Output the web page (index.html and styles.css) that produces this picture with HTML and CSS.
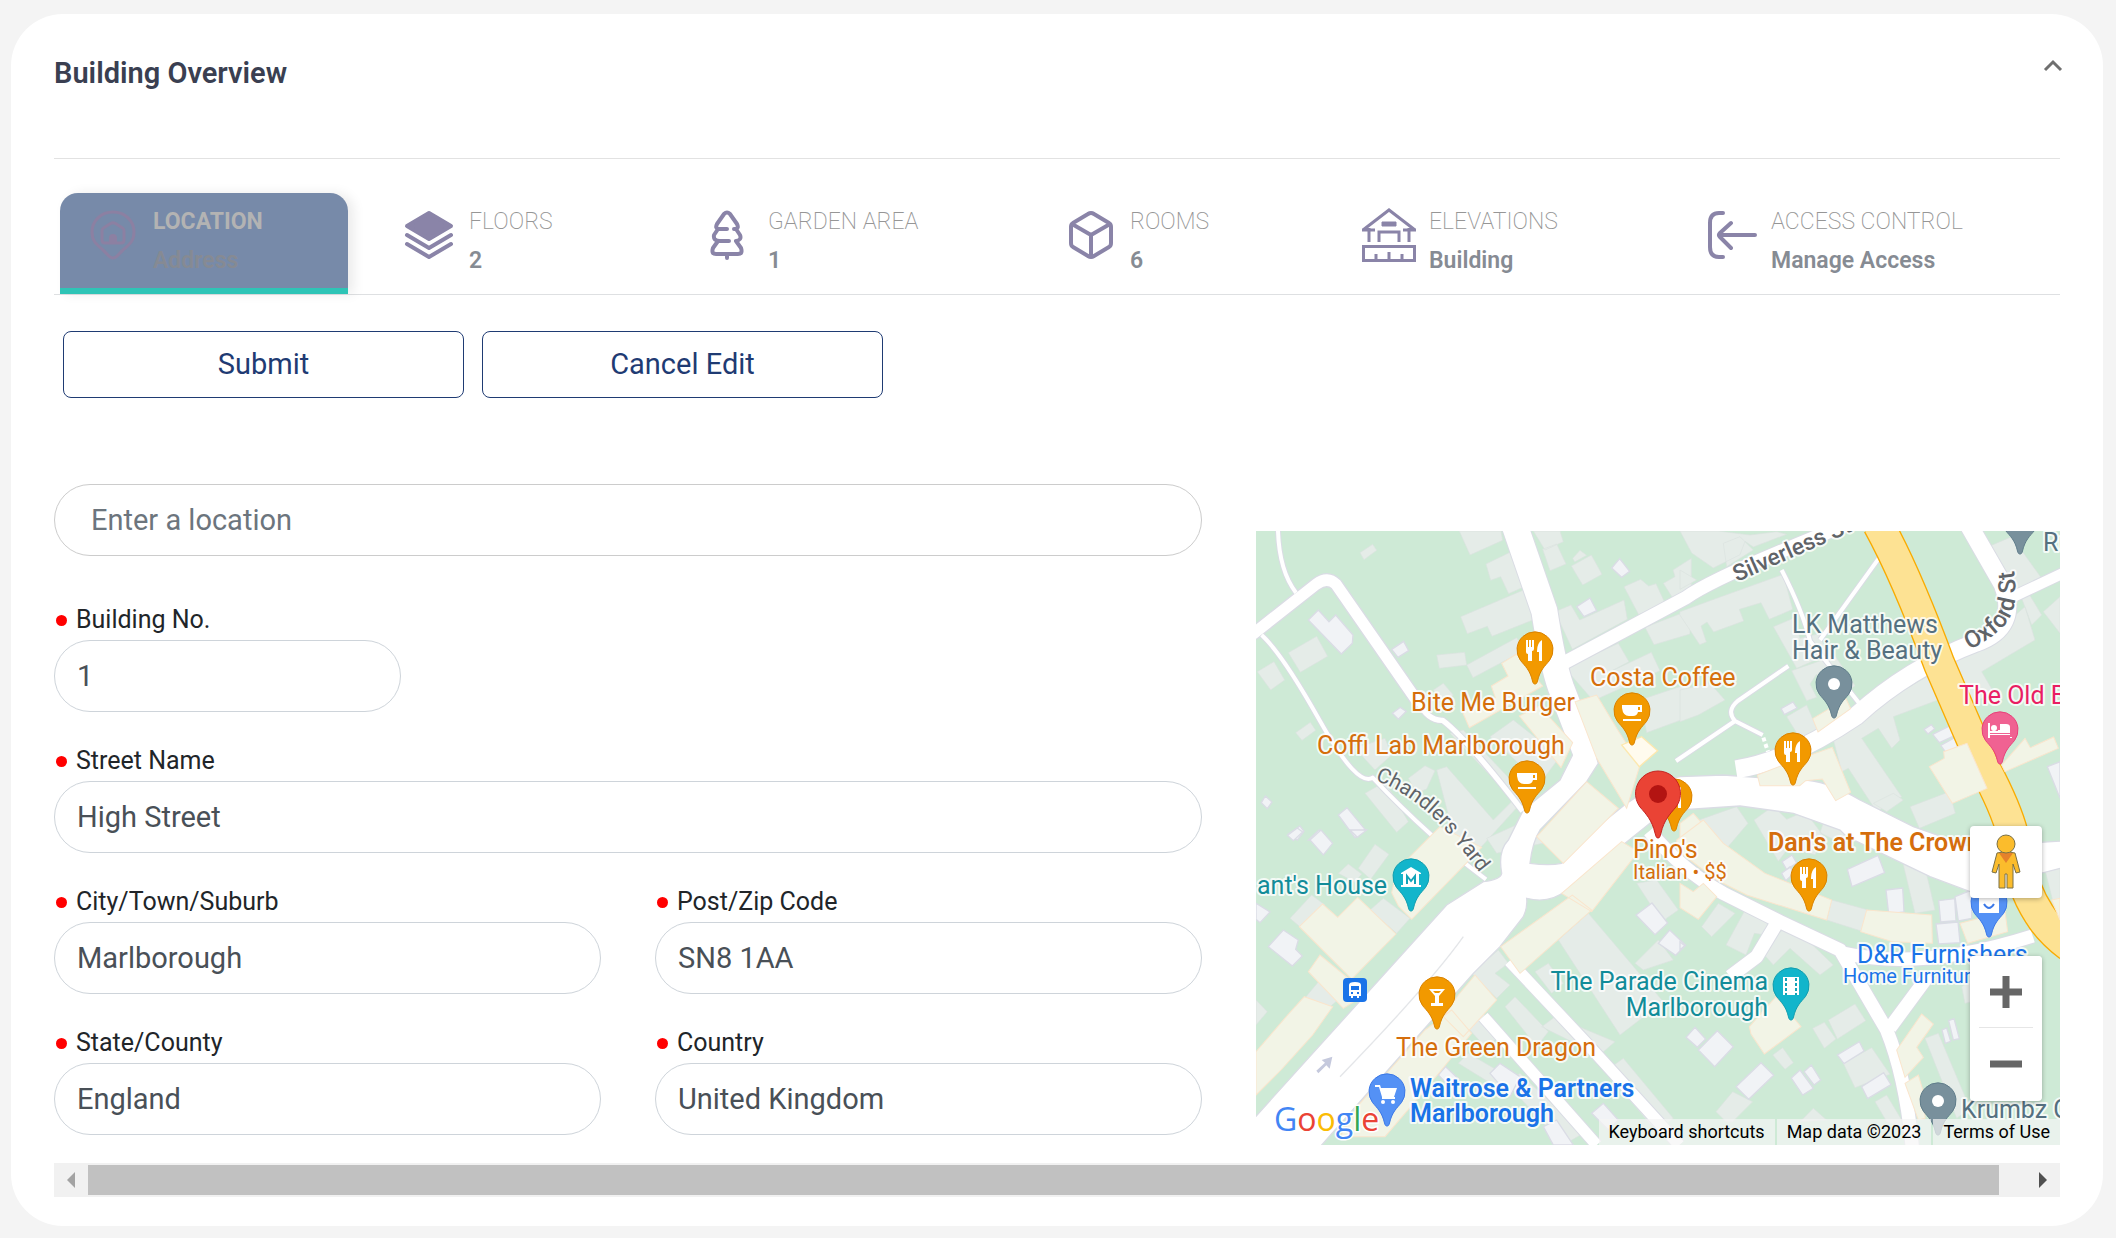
FILE: index.html
```html
<!DOCTYPE html>
<html lang="en">
<head>
<meta charset="utf-8">
<title>Building Overview</title>
<link rel="stylesheet" href="styles.css">
</head>
<body>
<main class="card">
  <header class="card-header">
    <h1 class="card-title">Building Overview</h1>
    <button class="collapse" type="button" aria-label="Collapse">
      <svg width="32" height="32" viewBox="0 0 32 32"><path d="M8 20l8-8 8 8" fill="none" stroke="#6f6f6f" stroke-width="3"/></svg>
    </button>
  </header>

  <nav class="tabs" role="tablist">
    <button class="tab tab-active" type="button" role="tab" aria-selected="true">
      <svg class="tab-icon" viewBox="0 0 54 54" fill="none" stroke-width="3" stroke-linecap="round" stroke-linejoin="round">
        <path d="M27 4C15 4 6 13 6 24c0 9 4 12 11 18 4 3.500 6 8 10 8s6-4.500 10-8c7-6 11-9 11-18C48 13 39 4 27 4z"/>
        <path d="M19 35h16q3 0 3-3v-9q0-2-1.500-3l-7-4.500q-2.500-1.500-5 0l-7 4.500q-1.500 1-1.500 3v9q0 3 3 3z"/>
        <path d="M25 34v-4q0-2 2-2t2 2v4z" stroke-width="4"/>
      </svg>
      <span class="tab-text"><span class="tab-label">LOCATION</span><span class="tab-value">Address</span></span>
    </button>
    <button class="tab" type="button" role="tab">
      <svg class="tab-icon" viewBox="0 0 54 54" fill="none" stroke-width="4" stroke-linecap="round" stroke-linejoin="round">
        <path d="M27 5L49 18 27 31 5 18z" fill="#8a84a8"/><path d="M5 27l22 13 22-13M5 36l22 13 22-13"/>
      </svg>
      <span class="tab-text"><span class="tab-label">FLOORS</span><span class="tab-value">2</span></span>
    </button>
    <button class="tab" type="button" role="tab">
      <svg class="tab-icon" viewBox="0 0 54 54" fill="none" stroke-width="4" stroke-linecap="round" stroke-linejoin="round">
        <path d="M20 21h-3q-3-1-1-5l7-10q3-3 6 0l7 10q2 4-1 5h-2M26 21h-9l-4 6q-1 6 6 6h9M35 21l4 6q2 5-4 6M17 33l-5 7q-2 6 3 6h22q5 0 3-6l-5-7M26 46v4"/>
      </svg>
      <span class="tab-text"><span class="tab-label">GARDEN AREA</span><span class="tab-value">1</span></span>
    </button>
    <button class="tab" type="button" role="tab">
      <svg class="tab-icon" viewBox="0 0 54 54" fill="none" stroke-width="4" stroke-linecap="round" stroke-linejoin="round">
        <path d="M25 6q3-2 6 0l15 9q2 1 2 4v16q0 3-2 4l-15 9q-3 2-6 0l-15-9q-2-1-2-4V19q0-3 2-4zM9 16l19 11 19-11M28 27v22"/>
      </svg>
      <span class="tab-text"><span class="tab-label">ROOMS</span><span class="tab-value">6</span></span>
    </button>
    <button class="tab" type="button" role="tab">
      <svg class="tab-icon" viewBox="0 0 54 54" fill="none" stroke-width="3">
        <path d="M1 22L27 2l26 20M7 20v14M13 22H0M41 22h13M47 20v14M17 34V24h20v10M1.500 38.500h51v14h-51zM14 46v6M27 44v8M40 46v6"/><path d="M20 14h14v4H20z" fill="#8a84a8" stroke-width="1"/>
      </svg>
      <span class="tab-text"><span class="tab-label">ELEVATIONS</span><span class="tab-value">Building</span></span>
    </button>
    <button class="tab" type="button" role="tab">
      <svg class="tab-icon" viewBox="0 0 54 54" fill="none" stroke-width="4" stroke-linecap="round">
        <path d="M19 5h-4Q6 5 6 15v24q0 10 9 10h4M51 27H16M27 15L16 25q-2 2 0 4l11 11"/>
      </svg>
      <span class="tab-text"><span class="tab-label">ACCESS CONTROL</span><span class="tab-value">Manage Access</span></span>
    </button>
  </nav>

  <div class="actions">
    <button class="btn" type="submit" form="address">Submit</button>
    <button class="btn" type="button">Cancel Edit</button>
  </div>

  <div class="content">
    <form class="form" id="address">
      <input class="input search" type="text" placeholder="Enter a location" aria-label="Enter a location">
      <div class="field wide"><label class="label" for="number">Building No.</label><input class="input short" id="number" type="text" value="1"></div>
      <div class="field wide"><label class="label" for="street">Street Name</label><input class="input" id="street" type="text" value="High Street"></div>
      <div class="field"><label class="label" for="city">City/Town/Suburb</label><input class="input" id="city" type="text" value="Marlborough"></div>
      <div class="field"><label class="label" for="zip">Post/Zip Code</label><input class="input" id="zip" type="text" value="SN8 1AA"></div>
      <div class="field"><label class="label" for="state">State/County</label><input class="input" id="state" type="text" value="England"></div>
      <div class="field"><label class="label" for="country">Country</label><input class="input" id="country" type="text" value="United Kingdom"></div>
    </form>

    <section class="map" aria-label="Map">
      <svg class="map-canvas" viewBox="0 0 804 614" preserveAspectRatio="xMidYMid slice">
        <defs>
          <path id="drop" d="M0 34C-1.500 34-2 33-2.500 31-5 20-10 16-14.500 10.500A18 18 0 1 1 14.500 10.500C10 16 5 20 2.500 31 2 33 1.500 34 0 34z"/>
          <g id="fork" fill="#fff"><path d="M-9-10h2v7h1v-7h2v7h1v-7h2v9q0 2-2 2v10h-4V4q-2 0-2-2zM2 1q0-8 5-11v21H4V2H2z"/></g>
          <g id="cup" fill="#fff"><path d="M-10-6h20v7H6q-1 4-5 4h-4q-6 0-7-8zM6-4v3h2v-3zM-9 8H9v2H-9z"/></g>
          <path id="silverless" d="M481 51L640-19"/>
          <path id="oxford" d="M713 119Q748 102 756 82T754 20"/>
          <path id="chandlers" d="M119 249Q160 265 190 300T242 367"/>
        </defs>
        <rect width="804" height="614" fill="#ceead6"/>
        <g transform="scale(.33334)">
          <!-- buildings standing on the grass -->
          <g class="house">
            <g transform="translate(-18 -33)">
              <path d="M628 33h125l5 28-98 44zM708 132l78-38 45 103-55 24-24-51-30 11zM632 290l200-85 34 88-140 56-14-30-60 22zM850 33h80l10 32-55 25zM878 88l42-16 28 60-48 20zM964 138l60-33 32 58-58 32zM968 115l22-24 20 15-36 20zM915 275l48-20 26 45 133-60 10 58-165 90zM1122 200l50-22 24 20 22-7 28 60-80 33zM1240 190l35-20-6-20 55-35v90l-54 32zM1185 322l135-52v72l-108 32zM560 405l84-8 6 38-82 10zM650 435l150-82 24 38-155 82zM945 445l160-75 32 55-60 32 127-60 26 55-200 90zM1170 540l150-50v100l-130 48zM115 398l85-49 33 60-82 48zM22 455l50-30 32 55-42 30zM137 638l44-31 16 24-41 30zM330 98l38-25 12 18-38 28zM345 820l60-35 70 120-35 32zM550 510l30-20 30 35-30 30zM560 750l30-10 140 160 60-60-190-200 40-10 190 200-190 210-60-20 40-40zM475 775l50-38 30 15-25 55-30 12zM720 650l70-50 140 110-60 80zM315 685l90-30 20 50-50 45z"/>
            </g>
            <g transform="translate(1272 -33)">
              <path d="M0 33h115l95 12 80-10 30 8-100 38-25-17-15 40-80 40-65-45zM130 70l50-20 40 40-80 50zM0 150l50 30-50 28zM0 275l110-40 200-72 28 105-70 30-25-50-65 20 13 35-90 33-20-30-18 12 16 48-20 8-60-90zM280 320l60-25 20 60 60-15 20 65-90 40zM335 452l130-45 60 90-60 45-55-80-20 30 20 40-30 10zM320 590l60-35 35 80-55 20zM0 510l90-20 45 50-80 45-55 20zM455 640l310-185 35 75-160 60 20 70-25 25-40-60-50 30 120 175-75 45-85-130-20 10zM815 410l70-20 150-130 30 100-160 95 35 60-70 40zM925 80l70-30 90 125-90 45zM1040 210l45 75-30 30-30-80zM1090 275l50-45v110zM690 860l118-45 18 65-108 45zM0 920l170-60 34 50-94 110-110-60zM222 900l58-42 40 40 55-24 60 80-30 50-80-20-30 40zM440 878l100 30-60 60-60-30z"/>
            </g>
            <g transform="translate(-18 897)">
              <path d="M325 115l50-72 42 30-55 75zM265 130l30-28 40 30-20 25zM120 265l65-70 40 30-70 70zM360 240l40-35 80 60-40 45zM160 510l48-58 70 45-40 35zM18 510l34 35-34 40zM665 430l80-70 30 40-40 30 45 35-40 40zM925 330l90-80 225 265-130 100zM855 425l40-25 45 60-35 30zM765 530l30-30 100 105-35 45zM875 590l40-30 180 75-40 35-60-60-20 30zM650 590l50-40 50 65-40 40zM625 700l30-30 120 70-20 40zM770 760l40-30 190 180-60 35zM1085 710l35-25 150 180-50 40-110-130zM1155 400l70-70 45 60-90 30zM1160 160l60-10 65 90-50 35zM900 35l-80-60-110 50 30 45z"/>
            </g>
            <g transform="translate(1272 807)">
              <path d="M670 195l60-15 35 150-60 10zM65 380l50-70 50 30-70 70zM138 435l60-110 75 40-15 40-35-5-25 65zM240 450l90-80 130 125-40 30-90-80-50 50zM455 300l110 30-15 65-110-35zM398 685l35-18 35 50-35 28zM445 660l80-48 32 50-85 55zM490 790l85-47 55 80-105 40zM735 715l40-15 95 225-40 30zM1090 190l50-10v120l-20 10zM845 560l30-20v65l-20 5zM278 765l30-22 32 45-25 20zM108 935l50-60 60 30-60 60h-20zM585 905l35-20 60 100-60-20zM360 965l40-40 40 35zM580 10l60-30 30 20-50 35z"/>
            </g>
          </g>
          <g class="shed">
            <path transform="translate(-18 -33)" d="M175 300l30-30 32 35 20-20 52 60-2 25-33 32zM425 388l36-24 15 28-32 20zM427 580l24-18 18 12-24 24zM265 885l26-22 54 65-30 25zM115 942l35-24 12 16-20 26zM34 848l12-20 20 18-14 20zM1085 144l24-28 30 38-24 18zM980 260l40-26 20 38-38 18zM175 960l32-30 30 30z"/>
            <path transform="translate(1272 -33)" d="M303 566l36-20 12 18-38 20zM732 628l22-14 10 12-20 16zM758 643l60-30 14 30-54 25zM782 676l58-32 8 28-50 26zM1102 740l38-15v110z"/>
            <path transform="translate(-18 897)" d="M180 30l33-30 35 40-28 35zM112 16l30-22 16 12-28 26zM55 350l45-50 45 30-8 28 20 20-30 30zM18 220l42 26-30 32-12-10zM300 0h50l-28 22zM565 735l22-25 42 40-22 28zM720 730l30-30 60 40-30 60zM1158 255l48-36 47 60-38 35zM1225 340l34-40 48 46-30 30zM1025 850l35-30 45 50-30 30zM880 890l40-20 50 75h-60z"/>
            <path transform="translate(1272 807)" d="M502 208l92-42 20 52-98 42zM618 270l50-6 4 72-46 6zM776 302l48-6 4 66-46 4zM768 372l66-6 6 62-64 4zM825 290l50-20v85l-40 8zM306 185l30-20 14 24-30 20zM305 220l25-20 12 20-25 22zM18 712l27-30 32 35-25 25zM55 750l57-58 48 48-56 60zM168 860l75-72 38 38-75 72zM334 834l26-24 40 55-32 20zM372 815l22-20 28 45-20 15zM472 765l66-40 14 28-60 38zM545 860l66-42 22 36-70 42zM786 690l14-6 12 40-16 6zM806 662l16-6 16 60-18 4zM0 425l14 12-14 12zM1095 375l45-25v40z"/>
          </g>
          <!-- street edges, then their white surface -->
          <g class="lane-edge">
            <path d="M66 0Q70 120 120 185M17 312Q80 370 192 570T350 740Q520 920 690 1045M1577 117Q1640 240 1662 330L1812 520M1692 327L1870 80M1597 405L1445 510Q1410 540 1437 570L1520 612M1437 570L1260 690" stroke-width="18"/>
            <path d="M-10 310L180 160Q215 135 240 160L490 520" stroke-width="42"/><path d="M485 510Q515 570 560 568Q630 620 800 840" stroke-width="22"/>
            <path d="M775-20L865 240Q890 400 915 470L1000 690" stroke-width="84"/>
            <path d="M925 395L1290 200Q1380 135 1800-30M1902 1490L2020 1330M1762 1267Q2000 1320 2330 1215M1562 1177L1502 1277 1422 1337" stroke-width="46"/>
            <path d="M2137-20L2240 160Q2290 290 2160 335Q1960 410 1800 555Q1600 690 1440 715" stroke-width="60"/><path d="M2272 197L2420 127" stroke-width="38"/>
            <path d="M760 1290L992 1537 1270 1842M682 1457L1022 1842" stroke-width="40"/>
            <path d="M1180 900Q1280 1020 1402 1087L1572 1172 1752 1257 1892 1497Q1950 1640 1970 1860" stroke-width="46"/>
          </g>
          <path id="high" class="high-street" d="M952 667L912 747 802 837 757 927Q725 960 737 1027Q735 1045 682 1052L572 1122-6 1762V1850H190L652 1327 732 1247 802 1157Q815 1130 812 1102Q880 1120 932 1077L1082 957 1190 870 1272 837 1452 825 1612 847 1752 897 1772 917 2022 1037 2142 1082 2420 1010V930L2142 947 1972 887 1812 807Q1700 740 1612 747L1402 732 1272 737 1217 747 1112 817 1012 897 917 997Q880 1005 822 997Q830 930 852 897L992 752 1027 697 1010 640z"/>
          <g class="lane">
            <path d="M66 0Q70 120 120 185M17 312Q80 370 192 570T350 740Q520 920 690 1045M1577 117Q1640 240 1662 330L1812 520M1692 327L1870 80M1597 405L1445 510Q1410 540 1437 570L1520 612M1437 570L1260 690" stroke-width="12"/>
            <path d="M-10 310L180 160Q215 135 240 160L490 520" stroke-width="34"/><path d="M485 510Q515 570 560 568Q630 620 800 840" stroke-width="16"/>
            <path d="M775-20L865 240Q890 400 915 470L1000 690" stroke-width="78"/>
            <path d="M925 395L1290 200Q1380 135 1800-30M1902 1490L2020 1330M1762 1267Q2000 1320 2330 1215M1562 1177L1502 1277 1422 1337" stroke-width="40"/>
            <path d="M2137-20L2240 160Q2290 290 2160 335Q1960 410 1800 555Q1600 690 1440 715" stroke-width="54"/><path d="M2272 197L2420 127" stroke-width="32"/>
            <path d="M760 1290L992 1537 1270 1842M682 1457L1022 1842" stroke-width="34"/>
            <path d="M1180 900Q1280 1020 1402 1087L1572 1172 1752 1257 1892 1497Q1950 1640 1970 1860" stroke-width="40"/>
            <path d="M1522 620l14 42" stroke-width="12" stroke-dasharray="12 8"/>
          </g>
          <path d="M1867-20Q1950 130 2050 400L2180 700Q2250 830 2270 910Q2290 1060 2350 1150Q2380 1200 2440 1245" fill="none" stroke="#f9ab00" stroke-width="98"/>
          <path d="M1867-20Q1950 130 2050 400L2180 700Q2250 830 2270 910Q2290 1060 2350 1150Q2380 1200 2440 1245" fill="none" stroke="#fde293" stroke-width="90"/>
          <!-- shops along the street -->
          <g class="shop">
            <path transform="translate(-18 -33)" d="M755 430l45-28 78 96-220 125-22-50 100-40-12-35 50-30zM808 588l60-30 100 110-35 75zM975 545l65-20 60 100 70 110-40 130-90-150z"/>
            <path transform="translate(1272 -33)" d="M398 596l100-60 14 30-98 70zM232 765l125-48 100-35 55 135-45 25-40-65-50 5-18 15H240zM748 740l45-25-2-20 70-25 60 135-104 45zM965 735l70-80 16 28 70-32 14 34-160 70zM0 910l40-30 35 40-40 50-35-10z"/>
            <path transform="translate(-18 897)" d="M440 120l130-130 125 62-210 216-40-40-20-40zM148 290l70-68 45 40 60-60 115 110-133 135zM175 425l35-50 140 115-70 45zM18 665l95-110 50-55 85 30-60 85-95 105-75 75zM860 20L1010-145l95 80L940 100zM752 350l215-155 58 45-215 190zM935 190l180-155 50 30-140 180zM625 495l50-60 65 75-100 110-60-60zM525 600l80-60 60 70-140 170-120 140H270l60-100z"/>
            <path transform="translate(1272 807)" d="M-10 120l80-60 60 70 125 90 200 80-15 60-240-75-90-45-120-90zM560 330l195 15 2 85-120-5-95-30zM208 680l80-90 75 90-110 82-40-60zM650 750l75-108 35 30-50 70 20 30-55 60zM675 850l40-25 18 60 2 70-20 5zM840 370l135-35 8 60-120 35zM0 250l40 25 30-25 40 40-55 68-55-35zM1115 300l25-5v65z"/>
          </g>
          <path transform="translate(-18 -33)" class="yellow-shop" d="M1115 675l60-25 48 42-55 48z"/>
          <path transform="translate(-18 897)" d="M205 730l-6-8 26-24-10-8 32-10-8 36-10-10z" fill="#c5c9dd"/>
          <path d="M622 1217Q520 1360 252 1637" fill="none" stroke="#e4e6e9" stroke-width="4"/>
        </g>

        <g class="place">
          <g class="street"><text font-size="23"><textPath href="#silverless">Silverless St</textPath></text><text font-size="24"><textPath href="#oxford">Oxford St</textPath></text><text class="yard" font-size="21"><textPath href="#chandlers">Chandlers Yard</textPath></text></g>
          <g class="food">
            <text x="155" y="180">Bite Me Burger</text><text x="61" y="223">Coffi Lab Marlborough</text><text x="334" y="155">Costa Coffee</text>
            <text x="377" y="327">Pino's</text><text class="sub" x="377" y="348">Italian • $$</text><text class="strong" x="512" y="320">Dan's at The Crown</text><text x="140" y="525">The Green Dragon</text>
          </g>
          <g class="service"><text x="536" y="102">LK Matthews</text><text x="536" y="128">Hair &amp; Beauty</text><text x="787" y="20">Ru</text><text x="705" y="587">Krumbz C</text></g>
          <g class="culture"><text x="1" y="363">ant's House</text><text x="512" y="459" text-anchor="end">The Parade Cinema</text><text x="512" y="485" text-anchor="end">Marlborough</text></g>
          <g class="retail"><text x="601" y="432">D&amp;R Furnishers</text><text class="sub" x="587" y="452">Home Furniture</text><text class="strong" x="154" y="566">Waitrose &amp; Partners</text><text class="strong" x="154" y="591">Marlborough</text></g>
          <text class="hotel" x="703" y="173">The Old B</text>
        </g>

        <g class="pins">
          <g transform="translate(279 119)" fill="#f29900" stroke="#d98200"><use href="#drop"/><use href="#fork" stroke="none"/></g>
          <g transform="translate(537 220)" fill="#f29900" stroke="#d98200"><use href="#drop"/><use href="#fork" stroke="none"/></g>
          <g transform="translate(553 346)" fill="#f29900" stroke="#d98200"><use href="#drop"/><use href="#fork" stroke="none"/></g>
          <g transform="translate(418 266)" fill="#f29900" stroke="#d98200"><use href="#drop"/><use href="#fork" stroke="none"/></g>
          <g transform="translate(376 180)" fill="#f29900" stroke="#d98200"><use href="#drop"/><use href="#cup" stroke="none"/></g>
          <g transform="translate(271 248)" fill="#f29900" stroke="#d98200"><use href="#drop"/><use href="#cup" stroke="none"/></g>
          <g transform="translate(181 464)" fill="#f29900" stroke="#d98200"><use href="#drop"/><path d="M-8-6H8L2 1v7h4v3H-6V8h4V1zM-4-4l2 2h4l2-2z" fill="#fff" stroke="none"/></g>
          <g transform="translate(155 346)" fill="#12b5cb" stroke="#129eaf"><use href="#drop"/><path d="M-10-4L0-10l10 6v1H8V8h2v2h-20V8h2V-3h-2z" fill="#fff" stroke="none"/><path d="M-4 7v-8l4 5 4-5v8" fill="none" stroke="#12a4b8" stroke-width="2"/></g>
          <g transform="translate(535 455)" fill="#12b5cb" stroke="#129eaf"><use href="#drop"/><path d="M-8-9H8V9H-8z" fill="#fff" stroke="none"/><path d="M-5-8V9M5-8V9" stroke="#12a4b8" stroke-width="2" stroke-dasharray="3 2"/></g>
          <g transform="translate(578 153)" fill="#78909c" stroke="#607d8b"><use href="#drop"/><circle r="6" fill="#fff" stroke="none"/></g>
          <g transform="translate(682 570)" fill="#78909c" stroke="#607d8b"><use href="#drop"/><circle r="6" fill="#fff" stroke="none"/></g>
          <g transform="translate(764 -11)" fill="#78909c" stroke="#607d8b"><use href="#drop"/></g>
          <g transform="translate(744 199)" fill="#f06292" stroke="#e8417a"><use href="#drop"/><path d="M-12-7h2V3h20V-3q0-3-4-3H0v6h-2v1h-8v3h20v3h2V8h-2V5h-20v3h-2z" fill="#fff" stroke="none"/><circle cx="-6" cy="-2" r="3" fill="#fff" stroke="none"/></g>
          <g transform="translate(131 561)" fill="#5491f5" stroke="#3b78e7"><use href="#drop"/><path d="M-12-7h5l1 3H10L7 5H-5L-8-5h-4z" fill="#fff" stroke="none"/><path d="M-5 6H8" stroke="#fff" stroke-width="2"/><circle cx="-4" cy="10" r="2" fill="#fff" stroke="none"/><circle cx="6" cy="10" r="2" fill="#fff" stroke="none"/></g>
          <g transform="translate(733 372)" fill="#5491f5" stroke="#3b78e7"><use href="#drop"/><path d="M-10-6h20v16h-20z" fill="#fff" stroke="none"/><path d="M-5 1q5 8 10 0" fill="none" stroke-width="2"/></g>
          <g transform="translate(87 447)"><rect width="24" height="24" rx="4" fill="#1a73e8"/><path d="M6 7q0-3 6-3t6 3v11h-2v2h-2v-2h-4v2H8v-2H6zM8 8v4h8V8zM8 14v2h2v-2zM14 14v2h2v-2z" fill="#fff" fill-rule="evenodd"/></g>
          <g transform="translate(402 263)" fill="#ea4335" stroke="#c5221f"><path d="M0 44C-2 44-2 42-3 39-6 26-12 20-18 13A22.500 22.500 0 1 1 18 13C12 20 6 26 3 39 2 42 2 44 0 44z"/><circle r="9" fill="#b31412" stroke="none"/></g>
        </g>
        <text class="logo" x="18" y="600"><tspan fill="#4285f4">G</tspan><tspan fill="#ea4335">o</tspan><tspan fill="#fbbc04">o</tspan><tspan fill="#4285f4">g</tspan><tspan fill="#34a853">l</tspan><tspan fill="#ea4335">e</tspan></text>
      </svg>
      <div class="map-controls">
        <button class="map-button" type="button" aria-label="Street View Pegman">
          <svg width="32" height="56" viewBox="0 0 32 56" stroke="#7a7046" stroke-width="1"><path d="M7 19q9-3 18 0l5 19-4 1-3-9v24h-6V40h-2v14H9V30L6 39l-4-1z" fill="#fbbc2c"/><path d="M9 19h14l-7 10z" fill="#e5812b" stroke="none"/><circle cx="16" cy="10" r="9" fill="#fbbc2c"/></svg>
        </button>
        <div class="zoom">
          <button class="map-button" type="button" aria-label="Zoom in"><svg width="32" height="32" viewBox="0 0 32 32"><path d="M16 0v32M0 16h32" stroke="#666" stroke-width="7"/></svg></button>
          <button class="map-button" type="button" aria-label="Zoom out"><svg width="32" height="32" viewBox="0 0 32 32"><path d="M0 16h32" stroke="#666" stroke-width="7"/></svg></button>
        </div>
      </div>
      <div class="attribution">
        <button class="credit" type="button">Keyboard shortcuts</button>
        <span class="credit">Map data ©2023</span>
        <a class="credit" href="#terms">Terms of Use</a>
      </div>
    </section>
  </div>

  <div class="scrollbar">
    <button class="scroll-arrow" type="button" aria-label="Scroll left"><svg width="8" height="16" viewBox="0 0 8 16"><path d="M8 0v16L0 8z" fill="#a3a3a3"/></svg></button>
    <div class="scroll-track"><div class="scroll-thumb"></div></div>
    <button class="scroll-arrow" type="button" aria-label="Scroll right"><svg width="8" height="16" viewBox="0 0 8 16"><path d="M0 0v16l8-8z" fill="#505050"/></svg></button>
  </div>
</main>
</body>
</html>
```
FILE: styles.css
```css
*, *::before, *::after { box-sizing: border-box; }
body {
  margin: 0;
  padding: 14px 13px 12px 11px;
  background: #f4f4f4;
  font-family: Roboto, "Liberation Sans", sans-serif;
  color: #212529;
}
button { padding: 0; border: 0; background: none; font: inherit; color: inherit; cursor: pointer; }
svg { display: block; }

.card { padding: 0 43px 29px; border-radius: 52px; background: #fff; }
.card-header {
  display: flex; justify-content: space-between; align-items: flex-start;
  padding: 36px 0 62px; border-bottom: 1px solid #e2e2e2;
}
.card-title { margin: 0; font-size: 29px; line-height: 46px; font-weight: 600; color: #3a3f51; }
.collapse { margin-right: -9px; }

.tabs {
  display: grid; grid-template-columns: 288fr 271fr 334fr 271fr 314fr 382fr; gap: 28px;
  margin-top: 34px; padding-left: 6px; border-bottom: 1px solid #dee0e2;
}
.tab {
  display: flex; align-items: center; gap: 13px;
  padding: 9px 0 8px 26px; border-bottom: 6px solid transparent; text-align: left;
}
.tab-active {
  border-bottom: 0; border-radius: 18px 18px 0 0;
  background: linear-gradient(#2ec4b6, #2ec4b6) bottom / 100% 6px no-repeat #778aa9;
  padding-bottom: 14px; box-shadow: 6px 0 12px rgba(0, 0, 0, .08);
}
.tab-icon { flex: none; width: 54px; height: 54px; margin-bottom: 12px; stroke: #8a84a8; }
.tab-active .tab-icon { stroke: #8c80a2; }
.tab-text { display: flex; flex-direction: column; font-size: 23px; line-height: 39px; white-space: nowrap; }
.tab-label { font-weight: 200; color: #969696; }
.tab-value { font-weight: 600; color: #868b93; }
.tab-active .tab-label { font-weight: 700; color: #b3b3b3; }
.tab-active .tab-value { color: #868a93; }

.actions { display: flex; gap: 18px; margin-top: 36px; padding-left: 9px; }
.btn {
  width: 401px; height: 67px; padding-bottom: 2px; border: 1px solid #1f3b73; border-radius: 8px;
  background: #fff; font-size: 29px; color: #1f3b73;
}

.content { display: grid; grid-template-columns: 1148fr 804fr; gap: 54px; margin-top: 86px; }
.form { display: grid; grid-template-columns: 1fr 1fr; gap: 29px 54px; align-content: start; }
.field { display: flex; flex-direction: column; }
.wide, .search { grid-column: 1 / -1; }
.input {
  width: 100%; height: 72px; padding: 0 22px; border: 1px solid #ced4da; border-radius: 36px;
  background: #fff; font: 400 29px Roboto, "Liberation Sans", sans-serif; color: #495057;
}
.input::placeholder { color: #6c757d; opacity: 1; }
.search { margin-bottom: 15px; padding: 0 36px; border-color: #ccc; }
.short { max-width: 347px; }
.label { display: flex; align-items: center; gap: 9px; padding-left: 2px; font-size: 25px; line-height: 40px; }
.label::before { content: ""; width: 11px; height: 11px; border-radius: 50%; background: red; }

.map { position: relative; overflow: hidden; height: 614px; margin-top: 47px; background: #ceead6; }
.map-canvas { width: 100%; height: 100%; }
.house path { fill: #e5ece8; stroke: #dbe3df; stroke-width: 2; }
.shed path { fill: #f1f3f6; stroke: #dadce5; stroke-width: 4; }
.shop path { fill: #f2f4e6; stroke: #fae5cd; stroke-width: 3; }
.yellow-shop { fill: #fffbee; stroke: #fde8ae; stroke-width: 4; }
.lane-edge { fill: none; stroke: #dadce4; stroke-linejoin: round; }
.lane { fill: none; stroke: #fff; stroke-linejoin: round; }
.high-street { fill: #fff; stroke: #dadce4; stroke-width: 4; }
.place { font-size: 25px; stroke: #fff; stroke-width: 4px; stroke-opacity: .8; stroke-linejoin: round; paint-order: stroke; }
.sub { font-size: 20px; }
.strong { font-weight: 600; }
.street { fill: #5f6368; font-weight: 500; }
.yard { font-weight: 400; }
.food { fill: #d56e0c; }
.service { fill: #557080; }
.culture { fill: #128c99; }
.retail { fill: #1a73e8; }
.hotel { fill: #e91e63; }
.logo { font-family: "Open Sans", sans-serif; font-size: 32px; font-weight: 500; stroke: #fff; stroke-width: 3px; paint-order: stroke; }

.map-controls { position: absolute; right: 18px; bottom: 44px; display: flex; flex-direction: column; gap: 58px; }
.map-button { display: flex; align-items: center; justify-content: center; width: 72px; height: 72px; border-radius: 4px; background: #fff; }
.map-controls > .map-button, .zoom { border-radius: 4px; box-shadow: 0 1px 5px rgba(0, 0, 0, .3); }
.zoom { padding-bottom: 1px; background: #fff; }
.zoom .map-button + .map-button::before {
  content: ""; position: absolute; bottom: 73px; width: 54px; height: 1px; background: #e6e6e6;
}
.attribution { position: absolute; right: 0; bottom: 0; display: flex; gap: 2px; font-size: 18px; line-height: 26px; }
.credit { padding: 0 10px; background: rgba(245, 245, 245, .7); color: #000; text-decoration: none; white-space: nowrap; }

.scrollbar { display: flex; height: 34px; margin-top: 18px; background: #f1f1f1; }
.scroll-arrow { display: flex; align-items: center; justify-content: center; width: 34px; }
.scroll-track { flex: 1; padding: 2px 0; }
.scroll-thumb { width: 98.6%; height: 100%; background: #c1c1c1; }
```
